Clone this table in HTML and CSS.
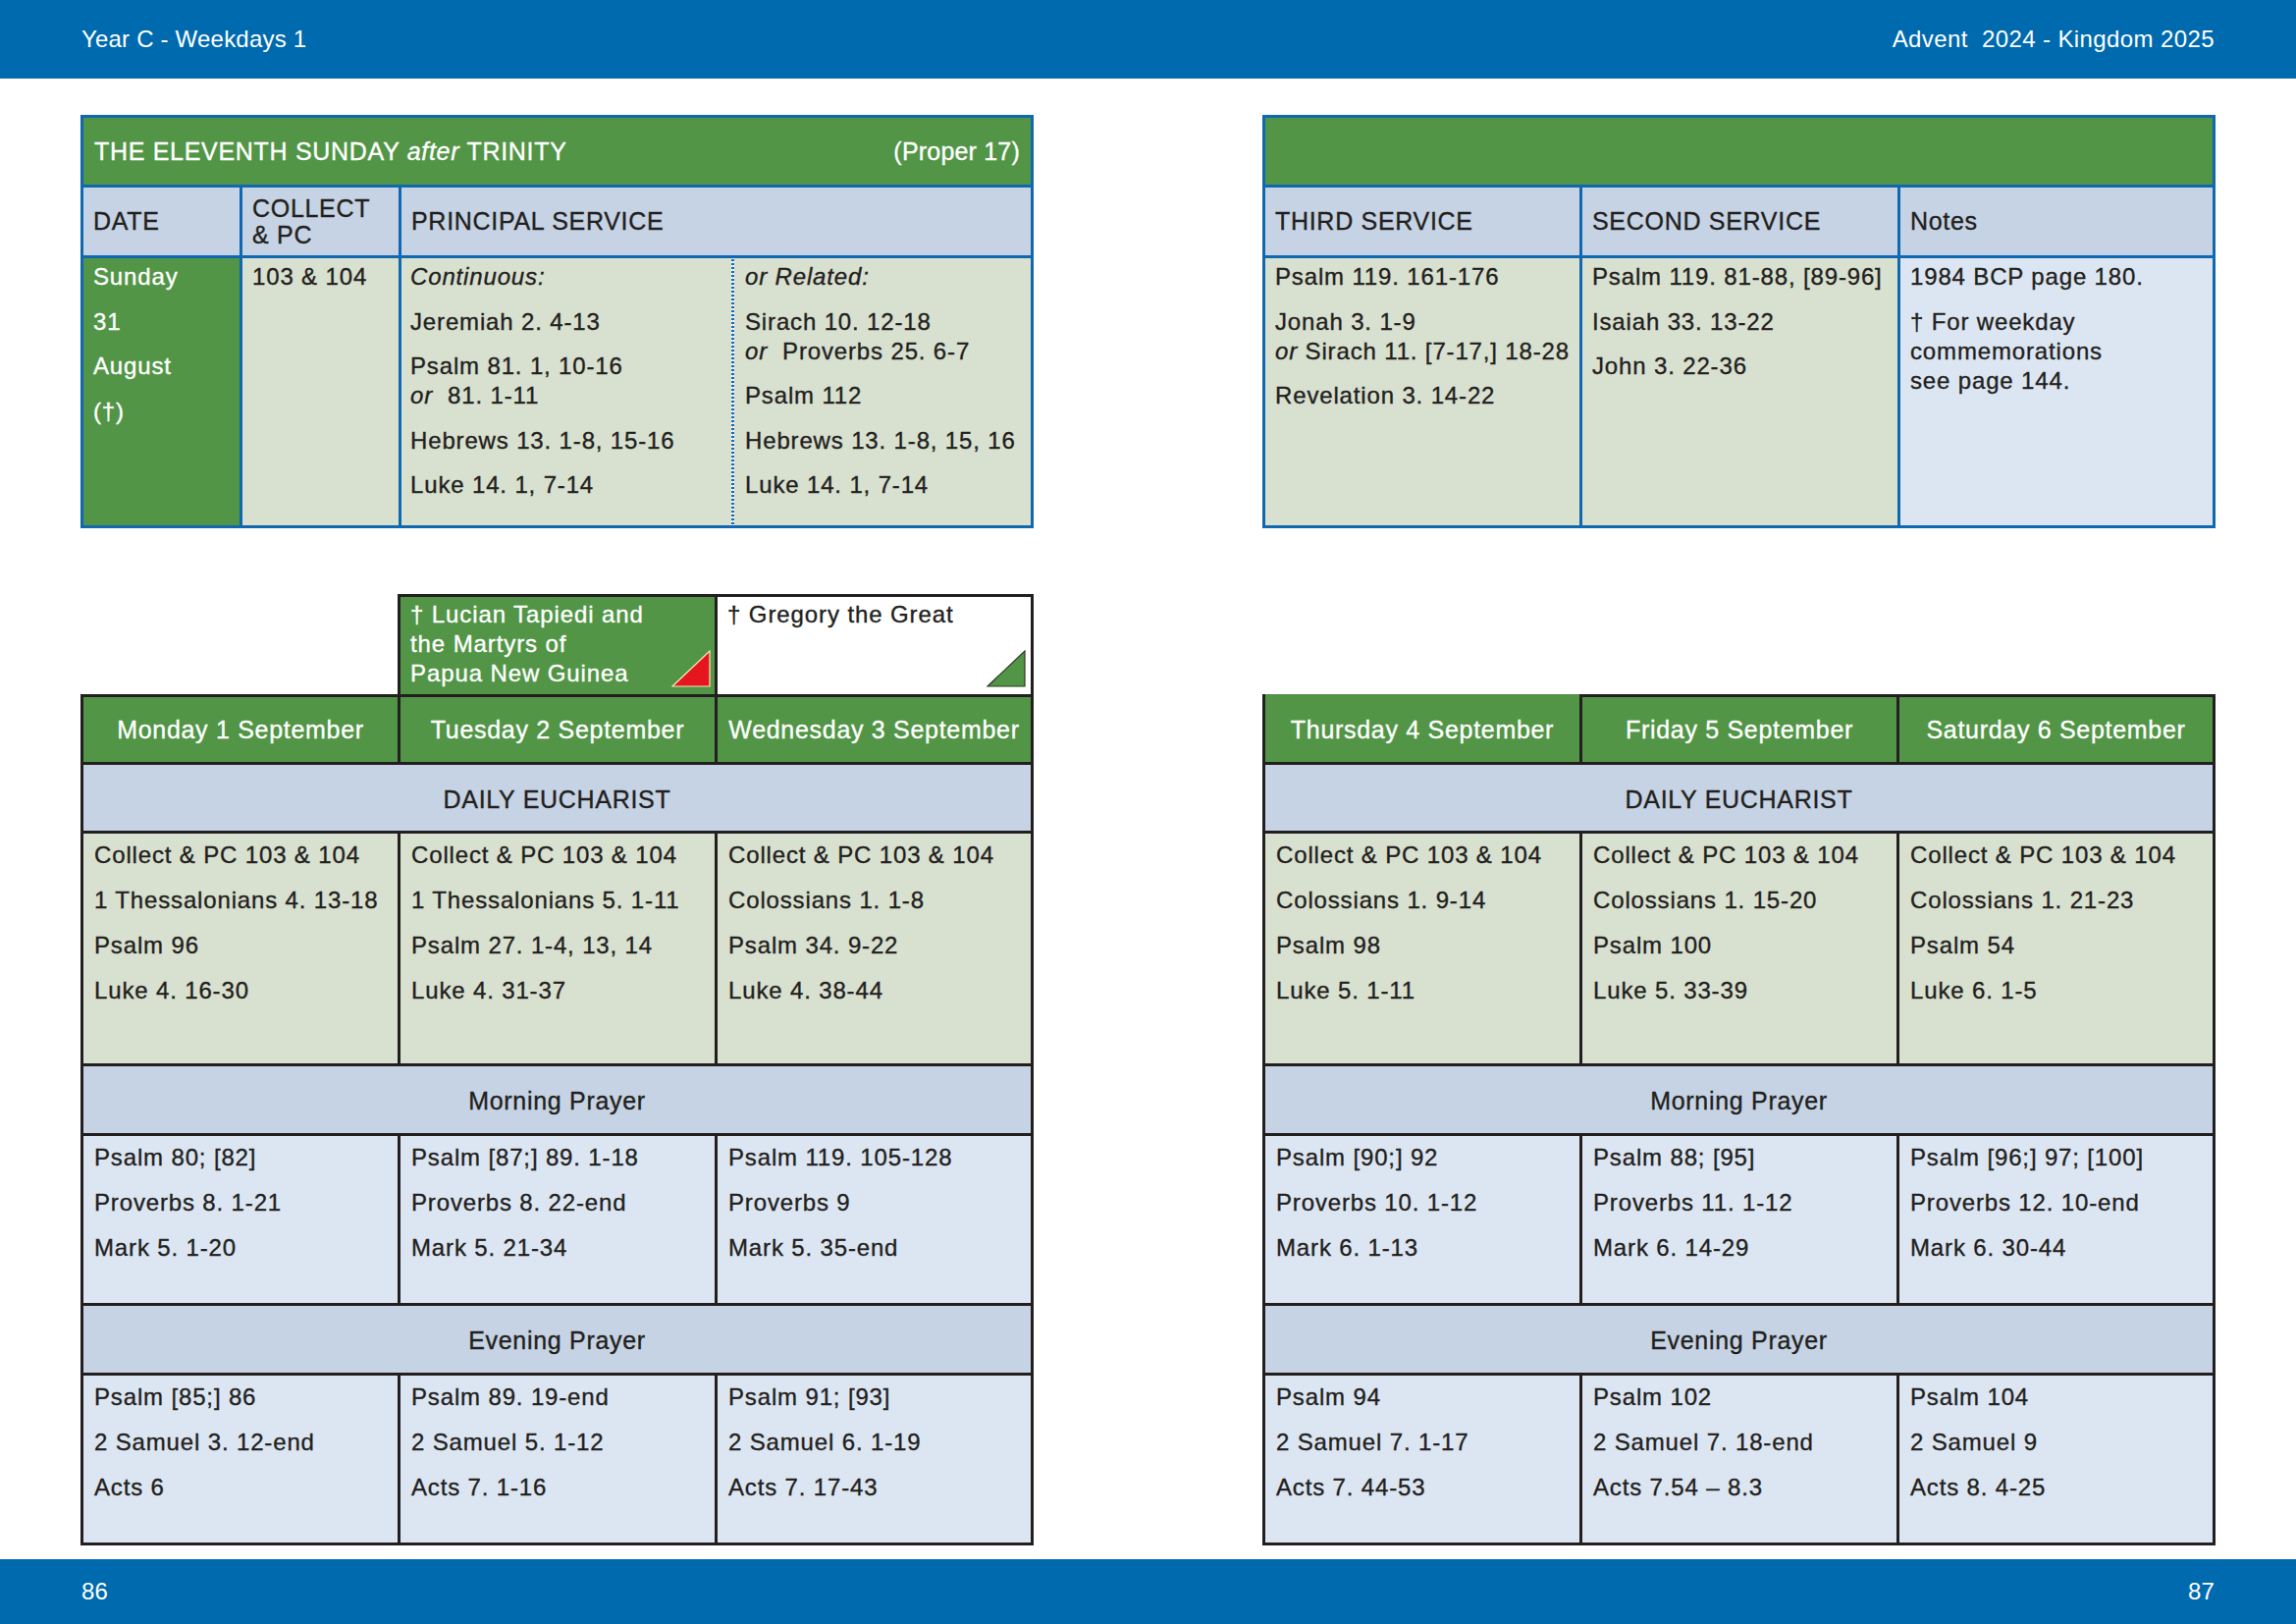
FILE: index.html
```html
<!DOCTYPE html>
<html lang="en">
<head>
<meta charset="utf-8">
<title>Year C - Weekdays 1</title>
<link rel="stylesheet" href="styles.css">
</head>
<body>
<header class="bar bar-top">
  <span>Year C - Weekdays 1</span>
  <span class="bar-right">Advent&nbsp; 2024 - Kingdom 2025</span>
</header>
<main class="spread">
  <section class="page">
    <div class="sun sun-left">
      <div class="title"><span>THE ELEVENTH SUNDAY <i>after</i> TRINITY</span><span class="proper">(Proper 17)</span></div>
      <div class="hd">DATE</div>
      <div class="hd hd-2">COLLECT<br>&amp; PC</div>
      <div class="hd">PRINCIPAL SERVICE</div>
      <div class="cell date">
        <p>Sunday</p><p>31</p><p>August</p><p>(†)</p>
      </div>
      <div class="cell"><p>103 &amp; 104</p></div>
      <div class="cell split">
        <div class="sub sub-a">
          <p><i>Continuous:</i></p>
          <p>Jeremiah 2. 4-13</p>
          <p>Psalm 81. 1, 10-16<br><i>or</i>&nbsp; 81. 1-11</p>
          <p>Hebrews 13. 1-8, 15-16</p>
          <p>Luke 14. 1, 7-14</p>
        </div>
        <div class="dots"></div>
        <div class="sub sub-b">
          <p><i>or Related:</i></p>
          <p>Sirach 10. 12-18<br><i>or</i>&nbsp; Proverbs 25. 6-7</p>
          <p>Psalm 112</p>
          <p>Hebrews 13. 1-8, 15, 16</p>
          <p>Luke 14. 1, 7-14</p>
        </div>
      </div>
    </div>

    <div class="commem-row">
      <div class="commem">
        <div class="cm cm-green">
          <p>† Lucian Tapiedi and<br>the Martyrs of<br>Papua New Guinea</p>
          <svg class="tri" width="40" height="38" viewBox="0 0 40 38"><polygon points="39,1 39,37 1,37" fill="#e5161e" stroke="#f4ecb8" stroke-width="1.2"/></svg>
        </div>
        <div class="cm cm-white">
          <p>† Gregory the Great</p>
          <svg class="tri tri-g" width="40" height="38" viewBox="0 0 40 38"><polygon points="39,1 39,37 1,37" fill="#529546" stroke="#2a3a22" stroke-width="1.2"/></svg>
        </div>
      </div>
    </div>

    <div class="week">
      <div class="day">Monday 1 September</div>
      <div class="day">Tuesday 2 September</div>
      <div class="day">Wednesday 3 September</div>
      <div class="band">DAILY EUCHARIST</div>
      <div class="wc wc-de"><p>Collect &amp; PC 103 &amp; 104</p><p>1 Thessalonians 4. 13-18</p><p>Psalm 96</p><p>Luke 4. 16-30</p></div>
      <div class="wc wc-de"><p>Collect &amp; PC 103 &amp; 104</p><p>1 Thessalonians 5. 1-11</p><p>Psalm 27. 1-4, 13, 14</p><p>Luke 4. 31-37</p></div>
      <div class="wc wc-de"><p>Collect &amp; PC 103 &amp; 104</p><p>Colossians 1. 1-8</p><p>Psalm 34. 9-22</p><p>Luke 4. 38-44</p></div>
      <div class="band">Morning Prayer</div>
      <div class="wc"><p>Psalm 80; [82]</p><p>Proverbs 8. 1-21</p><p>Mark 5. 1-20</p></div>
      <div class="wc"><p>Psalm [87;] 89. 1-18</p><p>Proverbs 8. 22-end</p><p>Mark 5. 21-34</p></div>
      <div class="wc"><p>Psalm 119. 105-128</p><p>Proverbs 9</p><p>Mark 5. 35-end</p></div>
      <div class="band">Evening Prayer</div>
      <div class="wc"><p>Psalm [85;] 86</p><p>2 Samuel 3. 12-end</p><p>Acts 6</p></div>
      <div class="wc"><p>Psalm 89. 19-end</p><p>2 Samuel 5. 1-12</p><p>Acts 7. 1-16</p></div>
      <div class="wc"><p>Psalm 91; [93]</p><p>2 Samuel 6. 1-19</p><p>Acts 7. 17-43</p></div>
    </div>
  </section>

  <section class="page">
    <div class="sun sun-right">
      <div class="title"></div>
      <div class="hd">THIRD SERVICE</div>
      <div class="hd">SECOND SERVICE</div>
      <div class="hd">Notes</div>
      <div class="cell">
        <p>Psalm 119. 161-176</p>
        <p>Jonah 3. 1-9<br><i>or</i> Sirach 11. [7-17,] 18-28</p>
        <p>Revelation 3. 14-22</p>
      </div>
      <div class="cell">
        <p>Psalm 119. 81-88, [89-96]</p>
        <p>Isaiah 33. 13-22</p>
        <p>John 3. 22-36</p>
      </div>
      <div class="cell notes">
        <p>1984 BCP page 180.</p>
        <p>† For weekday<br>commemorations<br>see page 144.</p>
      </div>
    </div>

    <div class="commem-row"></div>

    <div class="week">
      <div class="day day-open">Thursday 4 September</div>
      <div class="day">Friday 5 September</div>
      <div class="day">Saturday 6 September</div>
      <div class="band">DAILY EUCHARIST</div>
      <div class="wc wc-de"><p>Collect &amp; PC 103 &amp; 104</p><p>Colossians 1. 9-14</p><p>Psalm 98</p><p>Luke 5. 1-11</p></div>
      <div class="wc wc-de"><p>Collect &amp; PC 103 &amp; 104</p><p>Colossians 1. 15-20</p><p>Psalm 100</p><p>Luke 5. 33-39</p></div>
      <div class="wc wc-de"><p>Collect &amp; PC 103 &amp; 104</p><p>Colossians 1. 21-23</p><p>Psalm 54</p><p>Luke 6. 1-5</p></div>
      <div class="band">Morning Prayer</div>
      <div class="wc"><p>Psalm [90;] 92</p><p>Proverbs 10. 1-12</p><p>Mark 6. 1-13</p></div>
      <div class="wc"><p>Psalm 88; [95]</p><p>Proverbs 11. 1-12</p><p>Mark 6. 14-29</p></div>
      <div class="wc"><p>Psalm [96;] 97; [100]</p><p>Proverbs 12. 10-end</p><p>Mark 6. 30-44</p></div>
      <div class="band">Evening Prayer</div>
      <div class="wc"><p>Psalm 94</p><p>2 Samuel 7. 1-17</p><p>Acts 7. 44-53</p></div>
      <div class="wc"><p>Psalm 102</p><p>2 Samuel 7. 18-end</p><p>Acts 7.54 – 8.3</p></div>
      <div class="wc"><p>Psalm 104</p><p>2 Samuel 9</p><p>Acts 8. 4-25</p></div>
    </div>
  </section>
</main>
<footer class="bar bar-bottom"><span>86</span><span>87</span></footer>
</body>
</html>
```

FILE: styles.css
```css
* { box-sizing: border-box; margin: 0; padding: 0; }

html, body { width: 2339px; height: 1654px; }

body {
  font-family: "Liberation Sans", Arial, Helvetica, sans-serif;
  color: #231f20;
  background: #ffffff;
  display: flex;
  flex-direction: column;
  overflow: hidden;
}

/* page bars */
.bar {
  background: #006aaf;
  color: #ffffff;
  display: flex;
  justify-content: space-between;
  align-items: center;
  padding: 0 83px;
  font-size: 24px;
  letter-spacing: 0.2px;
}
.bar-right { letter-spacing: 0.4px; }
.bar-top { height: 80px; flex: none; }
.bar-bottom { height: 66px; flex: none; margin-top: auto; }

.spread {
  display: flex;
  justify-content: space-between;
  padding: 37px 82px 0;
}
.page {
  width: 971px;
  display: flex;
  flex-direction: column;
  -webkit-text-stroke: 0.35px currentColor;
}

/* Sunday tables */
.sun {
  display: grid;
  background: #1068b0;
  padding: 3px;
  gap: 3px;
  height: 421px;
  grid-template-rows: 68px 69px 272px;
}
.sun-left { grid-template-columns: 159px 159px 641px; }
.sun-right { grid-template-columns: 320px 321px 318px; }

.title {
  grid-column: 1 / -1;
  background: #529546;
  color: #ffffff;
  display: flex;
  justify-content: space-between;
  align-items: center;
  padding: 0 11px 0 11px;
  font-size: 25px;
  letter-spacing: 0.7px;
}
.title .proper { letter-spacing: 0.2px; }

.hd {
  background: #c5d3e4;
  display: flex;
  align-items: center;
  padding: 0 10px;
  font-size: 25px;
  letter-spacing: 0.7px;
}
.hd-2 { line-height: 27px; }

.cell, .sub, .wc {
  font-size: 24px;
  letter-spacing: 0.85px;
  line-height: 30px;
  display: flex;
  flex-direction: column;
  white-space: nowrap;
}
.cell { background: #d8e0cf; padding: 4px 10px 0; gap: 15.5px; }
.cell.date { background: #529546; color: #ffffff; }
.cell.notes { background: #dce6f2; }

.cell.split { flex-direction: row; padding: 0; gap: 0; }
.sub { padding: 4px 10px 0; gap: 15.5px; }
.sub-a { width: 336px; padding-left: 9px; }
.sub-b { flex: 1; padding-left: 11px; }
.dots {
  width: 3px;
  flex: none;
  background-color: #ffffff;
  background-image: radial-gradient(circle at center, #1e6cb2 0 1.2px, transparent 1.6px);
  background-size: 3px 4px;
}

/* commemorations */
.commem-row { height: 169px; display: flex; align-items: flex-end; flex: none; }
.commem {
  margin-left: 323px;
  width: 648px;
  height: 102px;
  background: #231f20;
  padding: 3px 3px 0;
  display: grid;
  grid-template-columns: 320px 319px;
  gap: 3px;
}
.cm {
  position: relative;
  padding: 3px 10px 0 10px;
  font-size: 24px;
  letter-spacing: 0.9px;
  line-height: 30px;
}
.cm-green { background: #529546; color: #ffffff; }
.cm-white { background: #ffffff; }
.tri { position: absolute; right: 4px; bottom: 7px; -webkit-text-stroke: 0; }
.tri-g { right: 5px; }

/* weekday tables */
.week {
  display: grid;
  background: #231f20;
  padding: 3px;
  gap: 3px;
  grid-template-columns: 320px 320px 319px;
  grid-template-rows: 66px 67px 234px 68px 170px 68px 170px;
}
.day {
  background: #529546;
  color: #ffffff;
  display: flex;
  align-items: center;
  justify-content: center;
  padding-top: 1px;
  font-size: 25px;
  letter-spacing: 0.7px;
}
.day-open { margin-top: -3px; padding-top: 4px; }
.band {
  grid-column: 1 / -1;
  background: #c5d3e4;
  display: flex;
  align-items: center;
  justify-content: center;
  padding-top: 3px;
  font-size: 25px;
  letter-spacing: 0.7px;
}
.wc { background: #dce6f2; padding: 6.5px 10px 0 11px; gap: 16px; }
.wc-de { background: #d8e0cf; padding-top: 7px; }
```
